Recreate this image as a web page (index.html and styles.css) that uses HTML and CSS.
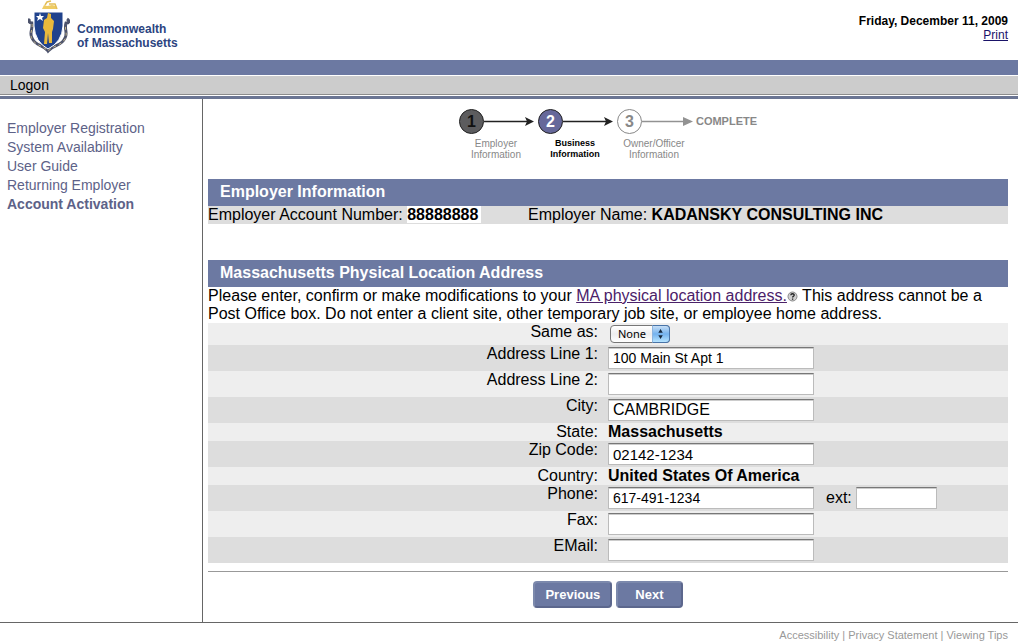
FILE: index.html
```html
<!DOCTYPE html>
<html lang="en">
<head>
    <meta charset="UTF-8">
    <meta name="viewport" content="width=device-width, initial-scale=1.0">
    <title>Employer Registration - Business Information</title>
    <link rel="stylesheet" href="styles.css">
</head>
<body>

    <header class="header">
        <div class="brand">
            <svg class="seal" width="42" height="54" viewBox="0 0 42 54" aria-hidden="true">
                <path d="M14 9 H29 L28 6 L24 5 L19 6 L16 5 Z" fill="#eecb63"/>
                <path d="M17 5 L19 2 L23 1 M21 4 L27 4 L29 9" fill="none" stroke="#e4be57" stroke-width="1.5"/>
                <path d="M2 19 C0 21 1 23 4 23 C5 29 1 33 4 38 C8 47 15 44 20 51 C26 44 33 47 37 38 C40 33 36 29 38 23 C41 23 42 21 39 19" fill="none" stroke="#4c526b" stroke-width="3"/>
                <path d="M4 24 C5 30 1 33 4 39 C8 46 14 45 20 51 C26 45 33 46 37 39 C40 33 36 30 38 24" fill="none" stroke="#c4b68c" stroke-width="1" stroke-dasharray="3 3"/>
                <path d="M6 12 H35 V26 Q34 42 20 49 Q7 42 6 26 Z" fill="#20428c" stroke="#fff" stroke-width="1"/>
                <path d="M12 13 L13 16 H16 L14 18 L15 21 L12 19 L9 21 L10 18 L8 16 H11 Z" fill="#fff"/>
                <path d="M20 13 L23 14 V18 L26 21 L25 29 L24 32 L24 43 H21 L20 33 L19 44 H16 L17 32 L15 28 L16 20 L19 18 Z" fill="#e9b93b"/>
            </svg>
            <div class="brand-name">Commonwealth<br>of Massachusetts</div>
        </div>
        <div class="header-info">
            <div class="date">Friday, December 11, 2009</div>
            <a class="print" href="#">Print</a>
        </div>
    </header>

    <div class="bar"></div>
    <div class="logon">Logon</div>

    <div class="page">
        <nav class="sidebar">
            <a href="#">Employer Registration</a>
            <a href="#">System Availability</a>
            <a href="#">User Guide</a>
            <a href="#">Returning Employer</a>
            <a href="#" class="current">Account Activation</a>
        </nav>

        <main class="content">
            <div class="steps">
                <div class="step done">
                    <div class="track">
                        <span class="circle">1</span>
                        <svg class="arrow" width="54" height="11" viewBox="0 0 54 11"><path d="M0 5.5H44" stroke="currentColor" stroke-width="1.5"/><path d="M41 1 L50 5.5 L41 10 L43 5.5 Z" fill="currentColor"/></svg>
                    </div>
                    <div class="step-label">Employer<br>Information</div>
                </div>
                <div class="step active">
                    <div class="track">
                        <span class="circle">2</span>
                        <svg class="arrow" width="54" height="11" viewBox="0 0 54 11"><path d="M0 5.5H44" stroke="currentColor" stroke-width="1.5"/><path d="M41 1 L50 5.5 L41 10 L43 5.5 Z" fill="currentColor"/></svg>
                    </div>
                    <div class="step-label">Business<br>Information</div>
                </div>
                <div class="step">
                    <div class="track">
                        <span class="circle">3</span>
                        <svg class="arrow" width="54" height="11" viewBox="0 0 54 11"><path d="M0 5.5H44" stroke="currentColor" stroke-width="1.5"/><path d="M41 1 L51 5.5 L41 10 Z" fill="currentColor"/></svg>
                    </div>
                    <div class="step-label">Owner/Officer<br>Information</div>
                </div>
                <div class="complete">COMPLETE</div>
            </div>

            <h2>Employer Information</h2>
            <div class="employer">
                <div>Employer Account Number: <b class="account">88888888</b></div>
                <div>Employer Name: <b>KADANSKY CONSULTING INC</b></div>
            </div>

            <h2>Massachusetts Physical Location Address</h2>
            <p class="intro">Please enter, confirm or make modifications to your <a href="#">MA physical location address.<svg class="help" width="11" height="11" viewBox="0 0 11 11"><circle cx="5.5" cy="5.5" r="4.5" fill="#d0d0d0" stroke="#8a8a8a"/><path d="M3.8 4.3 C3.8 2.2 7.3 2.3 7.2 4.2 C7.1 5.4 5.6 5.3 5.6 6.6 M5.6 7.6 V8.8" fill="none" stroke="#222" stroke-width="1.3"/></svg></a> This address cannot be a Post Office box. Do not enter a client site, other temporary job site, or employee home address.</p>

            <form>
                <div class="row">
                    <label for="sameAs">Same as:</label>
                    <div class="select">
                        <select id="sameAs">
                            <option>None</option>
                        </select>
                        <svg class="select-arrows" width="18" height="18" viewBox="0 0 18 18"><path d="M6 7.5 L8.5 3.5 L11 7.5 Z M6 10.5 L8.5 14.5 L11 10.5 Z" fill="#16283d"/></svg>
                    </div>
                </div>
                <div class="row">
                    <label for="address1">Address Line 1:</label>
                    <input type="text" id="address1" value="100 Main St Apt 1">
                </div>
                <div class="row">
                    <label for="address2">Address Line 2:</label>
                    <input type="text" id="address2">
                </div>
                <div class="row">
                    <label for="city">City:</label>
                    <input type="text" id="city" class="large" value="CAMBRIDGE">
                </div>
                <div class="row">
                    <span class="label">State:</span>
                    <b>Massachusetts</b>
                </div>
                <div class="row">
                    <label for="zip">Zip Code:</label>
                    <input type="text" id="zip" class="medium" value="02142-1234">
                </div>
                <div class="row">
                    <span class="label">Country:</span>
                    <b>United States Of America</b>
                </div>
                <div class="row">
                    <label for="phone">Phone:</label>
                    <div class="phone">
                        <input type="text" id="phone" value="617-491-1234">
                        <label for="ext" class="ext-label">ext:</label>
                        <input type="text" id="ext" class="ext">
                    </div>
                </div>
                <div class="row">
                    <label for="fax">Fax:</label>
                    <input type="text" id="fax">
                </div>
                <div class="row">
                    <label for="email">EMail:</label>
                    <input type="text" id="email">
                </div>

                <div class="buttons">
                    <button type="button">Previous</button>
                    <button type="submit">Next</button>
                </div>
            </form>
        </main>
    </div>

    <footer class="footer">
        <a href="#">Accessibility</a> | <a href="#">Privacy Statement</a> | <a href="#">Viewing Tips</a>
    </footer>

</body>
</html>
```
FILE: styles.css
```css
* { box-sizing: border-box; }
body { margin: 0; font-family: "Liberation Sans", Arial, sans-serif; font-size: 16px; line-height: 18px; color: #000; background: #fff; }

/* header */
.header { display: flex; justify-content: space-between; height: 60px; padding: 0 10px 0 28px; }
.brand { display: flex; gap: 7px; }
.seal { display: block; }
.brand-name { padding-top: 22px; font-size: 12px; line-height: 14px; font-weight: bold; color: #2c4480; }
.header-info { padding-top: 14px; text-align: right; font-size: 12px; line-height: 14px; }
.date { font-weight: bold; }
.print { color: #1a1368; }
.bar { height: 16px; background: #6c79a2; border-bottom: 1px solid #fff; }
.logon { height: 19px; padding-left: 10px; font-size: 14px; line-height: 19px; background: #ccc; border-bottom: 1px solid #8c8c8c; }

/* layout */
.page { display: flex; margin-top: 1px; border-top: 3px solid #6b7593; border-bottom: 1px solid #666; }
.sidebar { flex: 0 0 203px; padding: 20px 7px; border-right: 1px solid #666; font-size: 14px; line-height: 19px; }
.sidebar a { display: block; color: #5d6288; text-decoration: none; }
.sidebar .current { font-weight: bold; }
.content { flex: 1; padding: 10px 10px 14px 5px; }

/* progress steps */
.steps { display: flex; justify-content: center; height: 70px; }
.step { width: 79px; color: #888; }
.track { display: flex; align-items: center; }
.circle { width: 25px; height: 25px; border: 1px solid #888; border-radius: 50%; font-size: 16px; line-height: 23px; font-weight: bold; text-align: center; }
.arrow { display: block; color: #929292; }
.done .arrow, .active .arrow { color: #222; }
.done .circle { background: #5c5c5e; border-color: #222; color: #111; }
.active .circle { background: #66689a; border-color: #222; color: #fff; }
.step-label { width: 74px; padding-top: 4px; font-size: 10px; line-height: 11px; text-align: center; }
.active .step-label { font-size: 9px; color: #000; font-weight: bold; }
.complete { font-size: 11px; line-height: 25px; font-weight: bold; color: #888; }

h2 { margin: 0; padding: 0 12px; font-size: 16px; line-height: 26px; height: 27px; color: #fff; background: #6c79a2; }
.employer { display: grid; grid-template-columns: 2fr 3fr; margin-bottom: 36px; background: #ddd; }
.account { background: #fff; padding-right: 3px; }
.intro { margin: 0; }
.intro a { color: #4b2169; }
.help { vertical-align: -1px; }

/* address form */
.row { display: grid; grid-template-columns: calc(50% - 10px) 1fr; column-gap: 10px; background: #ddd; }
.row:nth-child(odd) { background: #eee; }
.row > label, .label { text-align: right; }
input { width: 206px; height: 22px; margin: 2px 0; padding: 0 4px; font-family: inherit; font-size: 14px; background: #fff; border: 1px solid #bbb; border-top-color: #777; box-shadow: inset 0 1px #ccc; }
.medium { font-size: 15px; }
.large { font-size: 16px; }
.phone { display: flex; align-items: center; }
.ext-label { padding: 0 4px 0 12px; }
.ext { width: 81px; }
.select { display: flex; position: relative; width: 60px; margin: 2px; }
.select select { appearance: none; width: 60px; height: 18px; padding: 0 20px 0 7px; font-family: "Noto Sans", sans-serif; font-size: 11px; line-height: 16px; color: #000; background: linear-gradient(#fff, #eee 50%, #fff); border: 1px solid #777; border-radius: 4px; }
.select-arrows { position: absolute; top: 0; right: 0; border-radius: 0 4px 4px 0; border: 1px solid #4974a8; border-left-color: #8db4de; background: linear-gradient(#c6def6, #74b2ee 50%, #b6e4ff); pointer-events: none; }

.buttons { display: flex; justify-content: center; gap: 4px; margin-top: 8px; padding-top: 9px; border-top: 1px solid #999; }
button { height: 27px; padding: 0 10px; font-family: inherit; font-size: 13px; font-weight: bold; color: #fff; background: #6c79a2; border: 2px solid; border-color: #7c89ac #5c678d #5c678d #7c89ac; border-radius: 4px; }
button[type=submit] { padding: 0 17px; }

.footer { padding: 3px 10px 0; text-align: right; font-size: 11px; color: #999; }
.footer a { color: #999; text-decoration: none; }
```
